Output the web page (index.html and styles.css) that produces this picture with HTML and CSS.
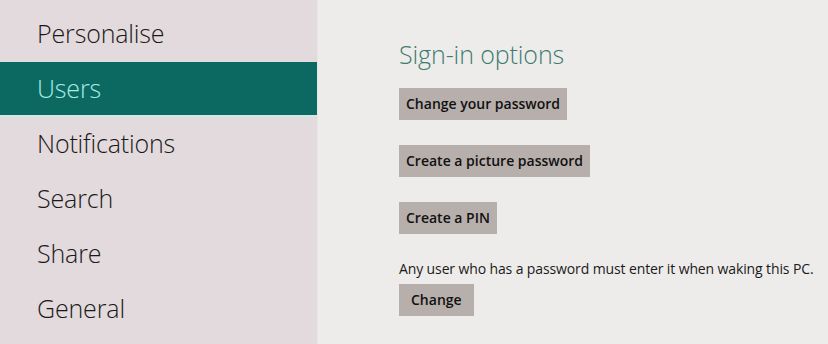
FILE: index.html
```html
<!DOCTYPE html>
<html>
<head>
<meta charset="utf-8">
<link rel="stylesheet" href="styles.css">
</head>
<body>
<div class="page">
  <nav class="sidebar">
    <div class="item">Personalise</div>
    <div class="item selected">Users</div>
    <div class="item">Notifications</div>
    <div class="item">Search</div>
    <div class="item">Share</div>
    <div class="item">General</div>
  </nav>
  <main class="content">
    <h1 class="title">Sign-in options</h1>
    <div class="btn">Change your password</div>
    <div class="btn">Create a picture password</div>
    <div class="btn">Create a PIN</div>
    <p class="note">Any user who has a password must enter it when waking this PC.</p>
    <div class="btn btn-change">Change</div>
  </main>
</div>
</body>
</html>
```
FILE: styles.css
```css
html, body {
  margin: 0;
  padding: 0;
}
body {
  width: 828px;
  height: 344px;
  overflow: hidden;
  font-family: "Open Sans", "Noto Sans", sans-serif;
  background: #eeecea;
}
.page {
  display: flex;
  height: 344px;
}
.sidebar {
  width: 318px;
  flex: none;
  background: #e2dadc;
  border-right: 1px solid #e9e4e5;
  padding-top: 7px;
  box-sizing: border-box;
}
.item {
  height: 55px;
  line-height: 53px;
  padding-left: 37px;
  font-size: 25px;
  font-weight: 350;
  color: #1c1819;
  letter-spacing: -0.15px;
}
.item.selected {
  background: #0c6962;
  color: #a5ece4;
  border-bottom: 2px solid #cfe9e6;
  height: 55px;
  box-sizing: border-box;
}
.content {
  flex: 1;
  padding-left: 81px;
  padding-top: 36px;
}
.title {
  margin: 0 0 15px 0;
  font-weight: 300;
  font-size: 25px;
  line-height: 37px;
  color: #3d7c70;
  letter-spacing: -0.1px;
}
.btn {
  display: table;
  height: 32px;
  line-height: 32px;
  padding: 0 7px;
  background: #b7afac;
  color: #111;
  font-weight: 600;
  font-size: 14px;
  margin-bottom: 25px;
}
.note {
  margin: 19px 0 5px 0;
  font-size: 14px;
  line-height: 20px;
  color: #1a1a1a;
  letter-spacing: -0.12px;
}
.btn-change {
  padding: 0 12px;
}
```
